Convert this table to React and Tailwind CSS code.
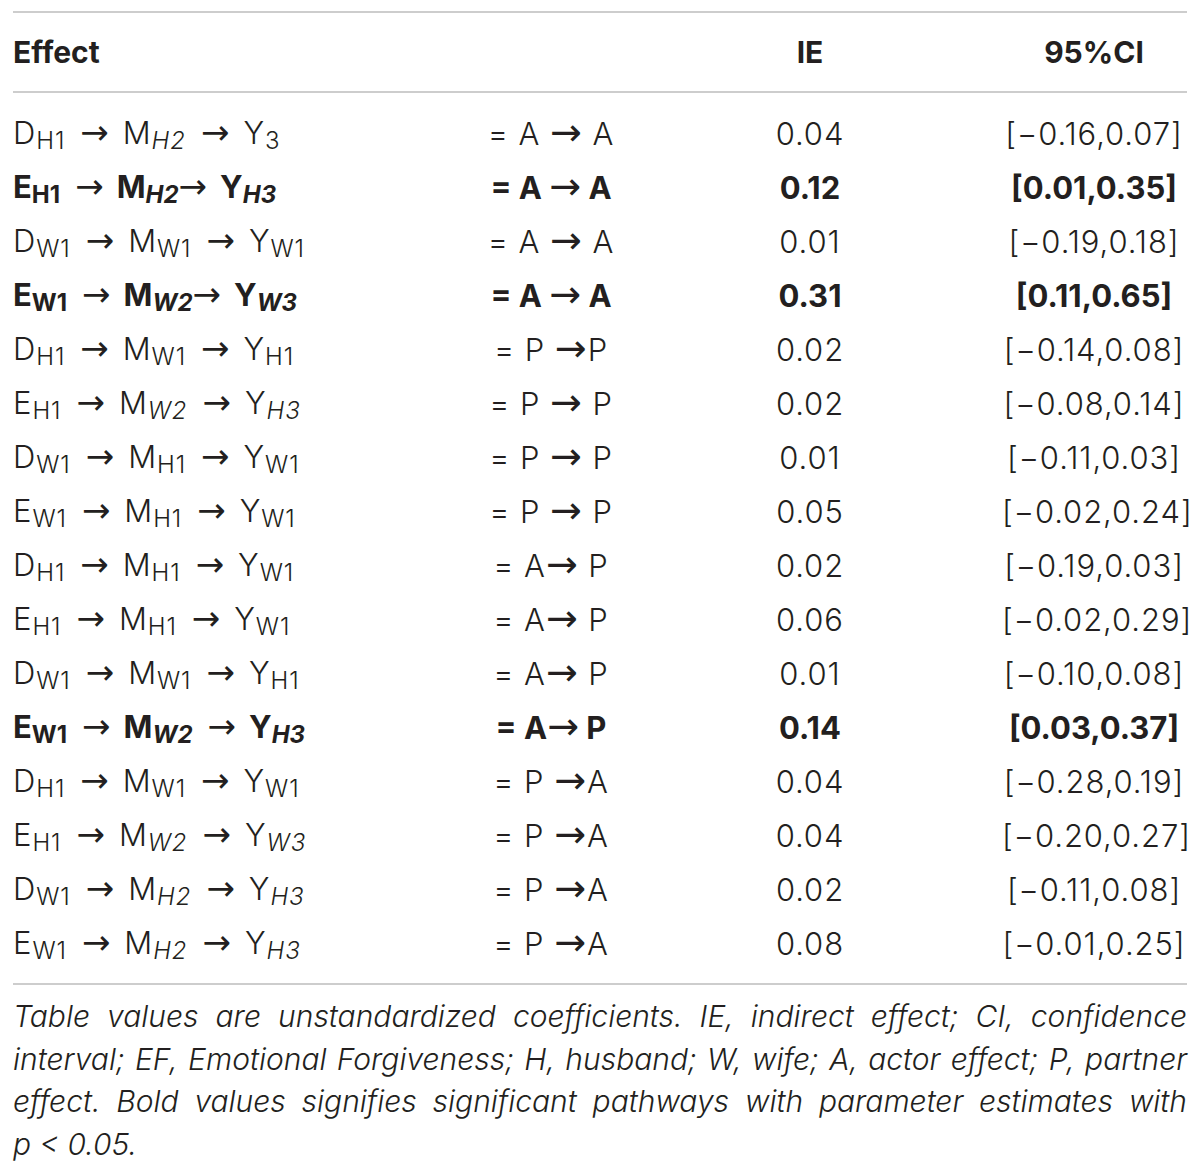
import React from 'react';

// each path step: [letter, subscript, italic subscript, no gap before the arrow]
const rows = [
  { p: [['D', 'H1'], ['M', 'H2', true], ['Y', '3']], t: '= A → A', ie: '0.04', ci: '[−0.16,0.07]' },
  { p: [['E', 'H1'], ['M', 'H2', true, true], ['Y', 'H3', true]], t: '= A → A', ie: '0.12', ci: '[0.01,0.35]', bold: true },
  { p: [['D', 'W1'], ['M', 'W1'], ['Y', 'W1']], t: '= A → A', ie: '0.01', ci: '[−0.19,0.18]' },
  { p: [['E', 'W1'], ['M', 'W2', true, true], ['Y', 'W3', true]], t: '= A → A', ie: '0.31', ci: '[0.11,0.65]', bold: true },
  { p: [['D', 'H1'], ['M', 'W1'], ['Y', 'H1']], t: '= P →P', ie: '0.02', ci: '[−0.14,0.08]' },
  { p: [['E', 'H1'], ['M', 'W2', true], ['Y', 'H3', true]], t: '= P → P', ie: '0.02', ci: '[−0.08,0.14]' },
  { p: [['D', 'W1'], ['M', 'H1'], ['Y', 'W1']], t: '= P → P', ie: '0.01', ci: '[−0.11,0.03]' },
  { p: [['E', 'W1'], ['M', 'H1'], ['Y', 'W1']], t: '= P → P', ie: '0.05', ci: '[−0.02,0.24]' },
  { p: [['D', 'H1'], ['M', 'H1'], ['Y', 'W1']], t: '= A→ P', ie: '0.02', ci: '[−0.19,0.03]' },
  { p: [['E', 'H1'], ['M', 'H1'], ['Y', 'W1']], t: '= A→ P', ie: '0.06', ci: '[−0.02,0.29]' },
  { p: [['D', 'W1'], ['M', 'W1'], ['Y', 'H1']], t: '= A→ P', ie: '0.01', ci: '[−0.10,0.08]' },
  { p: [['E', 'W1'], ['M', 'W2', true], ['Y', 'H3', true]], t: '= A→ P', ie: '0.14', ci: '[0.03,0.37]', bold: true },
  { p: [['D', 'H1'], ['M', 'W1'], ['Y', 'W1']], t: '= P →A', ie: '0.04', ci: '[−0.28,0.19]' },
  { p: [['E', 'H1'], ['M', 'W2', true], ['Y', 'W3', true]], t: '= P →A', ie: '0.04', ci: '[−0.20,0.27]' },
  { p: [['D', 'W1'], ['M', 'H2', true], ['Y', 'H3', true]], t: '= P →A', ie: '0.02', ci: '[−0.11,0.08]' },
  { p: [['E', 'W1'], ['M', 'H2', true], ['Y', 'H3', true]], t: '= P →A', ie: '0.08', ci: '[−0.01,0.25]' },
];

const Path = ({ parts }) => (
  <span>
    {parts.map(([v, sub, it, tight], i) => (
      <React.Fragment key={i}>
        {v}
        <span className={`text-[24px] align-[-5px] ${it ? 'italic' : ''}`}>{sub}</span>
        {i < parts.length - 1 && (
          <span className={`font-['DejaVu_Sans'] font-normal text-[34px] leading-none mr-[13px] ${tight ? 'ml-0' : 'ml-[15px]'}`}>→</span>
        )}
      </React.Fragment>
    ))}
  </span>
);

// "= A → A" style transition labels, arrow drawn a bit longer
const Trans = ({ text }) => {
  const [a, b] = text.split('→');
  return (
    <span>
      {a}
      <span className="font-['DejaVu_Sans'] font-normal text-[38px] leading-none">→</span>
      {b}
    </span>
  );
};

const cols = 'grid grid-cols-[390px_296px_222px_265px]';

export default function App() {
  return (
    <div className="bg-white w-[1200px] min-h-[1174px] px-[13px] pt-[11px] text-[#231f20] font-['Inter','Liberation_Sans',sans-serif]">
      <div className="border-t-2 border-[#cdcdcd]">
        <div className={`${cols} h-[78px] items-center text-[30px] font-bold`}>
          <div>Effect</div>
          <div></div>
          <div className="text-center">IE</div>
          <div className="text-center pl-[81px]">95%CI</div>
        </div>
      </div>
      <div className="border-t-2 border-[#cdcdcd] pt-[14px] pb-[12px]">
        {rows.map((r, i) => (
          <div
            key={i}
            className={`${cols} h-[54px] items-center text-[31px] whitespace-nowrap ${r.bold ? 'font-bold' : 'font-light tracking-[0.03em]'}`}
          >
            <div><Path parts={r.p} /></div>
            <div className="text-center"><Trans text={r.t} /></div>
            <div className="text-center">{r.ie}</div>
            <div className="text-center pl-[81px]">{r.ci}</div>
          </div>
        ))}
      </div>
      <div className="border-t-2 border-[#cdcdcd] pt-[10px] text-[30px] leading-[42.5px] italic font-light">
        <div className="text-justify [text-align-last:justify]">Table values are unstandardized coefficients. IE, indirect effect; CI, confidence</div>
        <div className="text-justify [text-align-last:justify]">interval; EF, Emotional Forgiveness; H, husband; W, wife; A, actor effect; P, partner</div>
        <div className="text-justify [text-align-last:justify]">effect. Bold values signifies significant pathways with parameter estimates with</div>
        <div>p &lt; 0.05.</div>
      </div>
    </div>
  );
}
